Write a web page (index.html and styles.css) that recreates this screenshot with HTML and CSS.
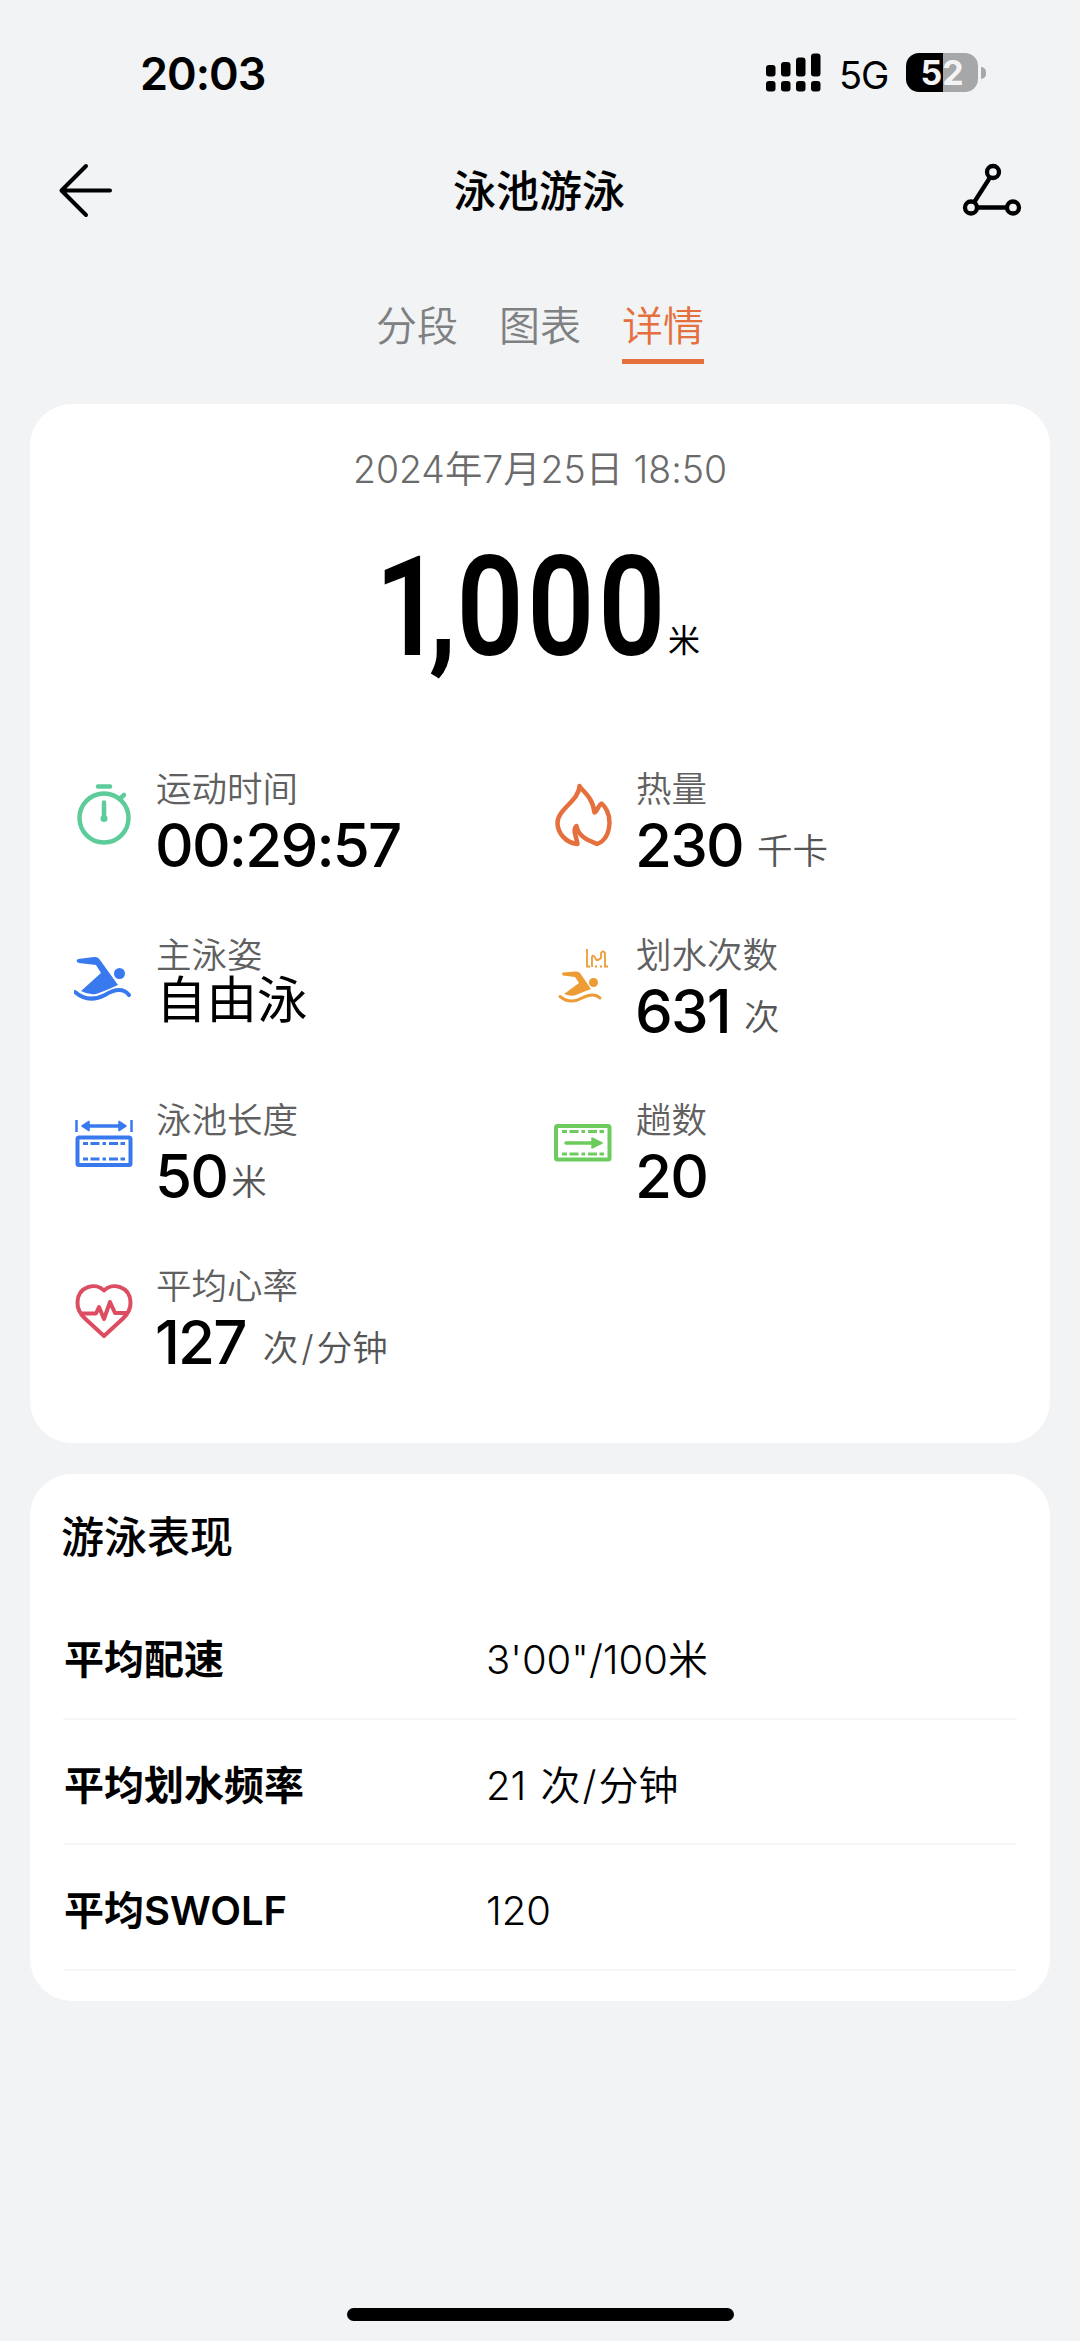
FILE: index.html
```html
<!DOCTYPE html>
<html lang="zh-CN">
<head>
<meta charset="utf-8">
<title>泳池游泳</title>
<link rel="stylesheet" href="styles.css">
</head>
<body>
<div class="status">
  <div class="clock">20:03</div>
  <div class="status-right">
    <svg class="signal" viewBox="0 0 56 40" width="56" height="40">
      <rect x="0" y="12" width="9.500" height="11.500" rx="3"/><rect x="15" y="9" width="9.500" height="14.500" rx="3"/><rect x="30" y="4.500" width="9.500" height="19" rx="3"/><rect x="45" y="0.500" width="9.500" height="23" rx="3"/>
      <rect x="0" y="28" width="9.500" height="10.500" rx="3"/><rect x="15" y="28" width="9.500" height="10.500" rx="3"/><rect x="30" y="28" width="9.500" height="10.500" rx="3"/><rect x="45" y="28" width="9.500" height="10.500" rx="3"/>
    </svg>
    <span class="network">5G</span>
    <div class="battery">52</div>
    <div class="battery-tip"></div>
  </div>
</div>
<header class="nav">
  <svg viewBox="0 0 60 60" width="60" height="60" fill="none" stroke="#000" stroke-width="4" stroke-linecap="round" stroke-linejoin="round"><path d="M54 29.500H6M30 5L5.500 29.500L30 54"/></svg>
  <h1>泳池游泳</h1>
  <svg viewBox="0 0 60 60" width="60" height="60" fill="none" stroke="#000" stroke-width="4.300"><circle cx="31" cy="11" r="6"/><circle cx="9" cy="46.500" r="6"/><circle cx="51" cy="46.500" r="6"/><path d="M28 16.500L12 41.500M15 46.500H45"/></svg>
</header>
<nav class="tabs"><a>分段</a><a>图表</a><a class="active">详情</a></nav>
<main>
  <section class="card summary">
    <div class="date">2024年7月25日 18:50</div>
    <div class="distance"><span class="big"><span class="thousand">1</span><span class="comma">,</span>000</span><span class="meter">米</span></div>
    <div class="stats">
      <div class="stat">
        <svg viewBox="0 0 60 64" width="60" height="64" fill="none" stroke="#5dcb9a" stroke-width="4.500" stroke-linecap="round"><circle cx="30" cy="35" r="24.500"/><path d="M24 3.500H36" stroke-width="4.500"/><path d="M46 15.500L50 12M30 19.500V35"/><circle cx="30" cy="35.500" r="3.500" fill="#5dcb9a" stroke="none"/></svg>
        <div><div class="label">运动时间</div><div class="value">00:29:57</div></div>
      </div>
      <div class="stat">
        <svg viewBox="0 0 60 64" width="60" height="64" fill="none" stroke="#e5703d" stroke-width="4.500" stroke-linejoin="round"><path d="M25.500 3C28 8 39 14 40.500 29.500C44 28 44 22 47.500 20.500C51 23 56 31 55.500 40C55 50 51 58 43 61C36 58 24 54 22.500 43C18 47 23 55 23.500 61C12 60 3.500 50 3.500 40C3.500 26 25 18 25.500 3Z"/></svg>
        <div><div class="label">热量</div><div class="value">230<span class="unit spaced">千卡</span></div></div>
      </div>
      <div class="stat">
        <svg viewBox="0 0 60 64" width="60" height="64" fill="#3979ee"><path d="M4 10Q2 11 3 13L5 14L22 16L27 24L7 42Q14 46 22 45Q31 42 44 36L26 11Q24 7.500 20 8Z"/><circle cx="45.500" cy="24.500" r="5.500"/><path d="M1 43C10 51 21 51 31 46Q47 36 55 46" fill="none" stroke="#3979ee" stroke-width="4" stroke-linecap="round"/></svg>
        <div><div class="label">主泳姿</div><div class="value chinese">自由泳</div></div>
      </div>
      <div class="stat">
        <svg viewBox="0 0 60 64" width="60" height="64" fill="#ed9c35"><path d="M9 23.500Q7 24.500 9 26.500L21 28L25 34L10 45Q17 48 22 46Q29 43 37 40L26 24Q24 22 21 22.500Z"/><circle cx="39.500" cy="33.500" r="4.500"/><path d="M6 47.500C14 54 21 53 28 49Q40 43 46 49" fill="none" stroke="#ed9c35" stroke-width="3" stroke-linecap="round"/><path d="M33 0V17.500H36M38 18V8Q38 6 40 7L42.500 11H44L47 9V4Q49 1 51 4V17.500H54M41 17.500H43M46 17.500H48" fill="none" stroke="#ed9c35" stroke-width="1.800"/></svg>
        <div><div class="label">划水次数</div><div class="value">631<span class="unit spaced">次</span></div></div>
      </div>
      <div class="stat">
        <svg viewBox="0 0 60 64" width="60" height="64" fill="none" stroke="#3979ee" stroke-width="4"><rect x="3.500" y="23.500" width="53" height="27.500" rx="1.500"/><path d="M2.500 6V18M57.500 6V18" stroke-width="2.500"/><path d="M12 12H48" stroke-width="3.500"/><path d="M15 7.500V16.500L8 12ZM45 7.500V16.500L52 12Z" fill="#3979ee" stroke-width="1.500" stroke-linejoin="round"/><path d="M9 29.500H51M9 45H51" stroke-width="2.800" stroke-dasharray="5 2.500 9 3 3.500 3 9 2.500 5 2"/></svg>
        <div><div class="label">泳池长度</div><div class="value">50<span class="unit">米</span></div></div>
      </div>
      <div class="stat">
        <svg viewBox="0 0 60 64" width="60" height="64" fill="none" stroke="#6dcb5e" stroke-width="4"><rect x="2" y="12" width="53.500" height="33.500" rx="1.500"/><path d="M12 29H40" stroke-linecap="round" stroke-width="3.500"/><path d="M38 24V34L48 29Z" fill="#6dcb5e" stroke-width="1.500" stroke-linejoin="round"/><path d="M8 17.500H50M8 40H50" stroke-width="2.800" stroke-dasharray="5 2.500 9 3 3.500 3 9 2.500 5 2"/></svg>
        <div><div class="label">趟数</div><div class="value">20</div></div>
      </div>
      <div class="stat">
        <svg viewBox="0 0 60 64" width="60" height="64" fill="none" stroke="#dd4d62" stroke-width="4" stroke-linejoin="round" stroke-linecap="round"><path d="M30 56L11 38.500Q3 31 3.500 22C4 6 22 2 30 10.500C38 2 56 6 56.500 22Q57 31 49 38.500Z"/><path d="M8 33.500H22L25 27L30 39L36 22L41 33H52"/></svg>
        <div><div class="label">平均心率</div><div class="value">127<span class="unit rate">次<i>/</i>分钟</span></div></div>
      </div>
    </div>
  </section>
  <section class="card performance">
    <h2>游泳表现</h2>
    <div class="row"><span class="name">平均配速</span><span>3'00"/100米</span></div>
    <div class="row"><span class="name">平均划水频率</span><span>21 次<i>/</i>分钟</span></div>
    <div class="row"><span class="name">平均<b>SWOLF</b></span><span class="swolf">120</span></div>
  </section>
</main>
<div class="home"></div>
</body>
</html>
```
FILE: styles.css
```css
* { box-sizing: border-box; }
body {
  margin: 0;
  width: 1080px;
  height: 2341px;
  display: flex;
  flex-direction: column;
  background: #f1f3f5;
  color: #000;
  font-family: Inter, "Noto Sans CJK SC", sans-serif;
}
svg { display: block; flex: none; }
i { font-style: normal; }
.status {
  height: 146px;
  padding: 0 94px 0 140px;
  display: flex;
  justify-content: space-between;
}
.clock { margin-top: 46px; font-size: 45px; line-height: 56px; font-weight: 600; letter-spacing: -1px; }
.status-right { display: flex; height: 40px; margin-top: 53px; align-items: center; }
.network { margin-left: 17px; width: 48px; font-size: 38px; line-height: 40px; margin-top: 3px; letter-spacing: -1px; }
.battery {
  margin-left: 19px;
  width: 72px;
  height: 39px;
  margin-top: -1px;
  border-radius: 13px;
  background: linear-gradient(to right, #000 37px, #a6a7a8 37px);
  color: #f4f4f4;
  font-size: 34px;
  line-height: 39px;
  font-weight: 700;
  text-align: center;
}
.battery-tip { width: 5px; height: 12px; margin-left: 3px; border-radius: 0 6px 6px 0; background: #a6a7a8; }
.nav { height: 90px; padding: 0 58px 0 56px; display: flex; align-items: center; justify-content: space-between; }
h1, h2 { margin: 0; font-size: 43px; line-height: 60px; font-weight: 500; }
.tabs { height: 168px; padding-top: 60px; display: flex; justify-content: center; gap: 41px; font-size: 41px; font-weight: 350; color: #7f8081; }
.tabs a { height: 68px; line-height: 60px; }
.tabs .active { color: #e5703d; border-bottom: 5px solid #e5703d; }
main { display: flex; flex-direction: column; gap: 31px; padding: 0 30px; }
.card { background: #fff; border-radius: 42px; }
.summary { height: 1039px; padding-top: 36px; }
.date { text-align: center; font-size: 37.400px; line-height: 60px; color: #6b6b6b; font-weight: 350; font-feature-settings: "calt" 0; }
.distance { display: flex; height: 140px; margin-top: 35px; padding-left: 345px; align-items: baseline; }
.big {
  width: 293px;
  font-family: Roboto, sans-serif;
  font-size: 140px;
  line-height: 140px;
  font-weight: 600;
  letter-spacing: 4.500px;
  white-space: nowrap;
  transform: translateY(2px) scaleX(.84);
  transform-origin: left;
}
.thousand { letter-spacing: -16px; }
.comma { letter-spacing: 0; }
.meter { font-size: 32px; transform: translateY(-1px); }
.stats { display: grid; grid-template-columns: 480px 1fr; grid-auto-rows: 165.700px; padding: 90px 0 0 44px; }
.stat { display: flex; gap: 22px; }
.stat svg { margin-top: 18px; }
.label { padding-top: 1px; font-size: 35.500px; line-height: 48px; color: #606060; font-weight: 350; }
.value {
  margin: -1px 0 0 -1px;
  font-size: 60px;
  line-height: 64px;
  font-weight: 500;
  letter-spacing: -1.800px;
  font-feature-settings: "calt" 0;
  white-space: nowrap;
}
.value.chinese { margin: -6px 0 0; font-size: 50.500px; line-height: 52px; font-weight: 400; letter-spacing: 0; }
.unit { margin-left: 4px; font-size: 35.500px; line-height: 1; font-weight: 350; color: #555; letter-spacing: 0; vertical-align: 3px; }
.unit.spaced { margin-left: 14px; }
.unit.rate { margin-left: 17px; }
.unit i { padding: 0 3px; }
.performance { height: 527px; padding: 33px 33px 0 31px; }
.row {
  height: 125.500px;
  padding-top: 3px;
  margin-left: 2px;
  display: grid;
  grid-template-columns: 423px 1fr;
  align-items: center;
  border-bottom: 2px solid #f7f7f7;
  font-size: 40px;
  font-weight: 350;
  word-spacing: 3px;
}
h2 + .row { margin-top: 27px; }
.row .name { padding-left: 1px; font-weight: 600; }
.row b { font-weight: 560; }
.row i { padding: 0 2px; }
.row .swolf { padding-top: 4px; }
.home { width: 387px; height: 13px; margin: auto auto 20px; border-radius: 7px; background: #000; }
```
